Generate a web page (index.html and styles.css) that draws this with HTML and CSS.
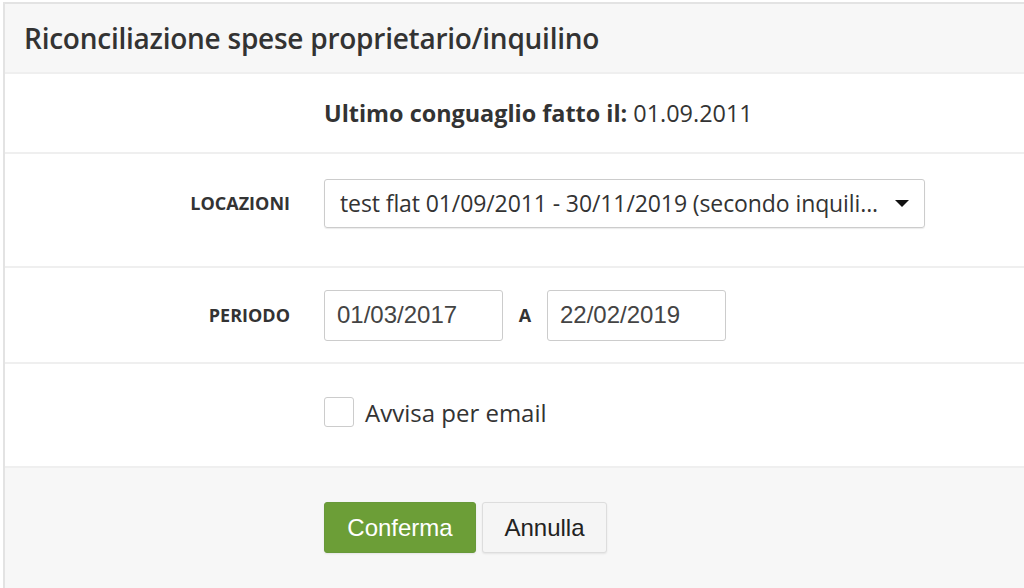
FILE: index.html
```html
<!DOCTYPE html>
<html lang="it">
<head>
    <meta charset="UTF-8">
    <title>Riconciliazione spese</title>
    <link rel="stylesheet" href="styles.css">
</head>
<body>
    <div class="modal">
        <div class="modal-header">
            <h1>Riconciliazione spese proprietario/inquilino</h1>
        </div>
        <div class="row">
            <div class="label"></div>
            <div class="control"><p class="info"><b>Ultimo conguaglio fatto il:</b> 01.09.2011</p></div>
        </div>
        <div class="row row-select">
            <div class="label">LOCAZIONI</div>
            <div class="control">
                <div class="select">
                    <span>test flat 01/09/2011 - 30/11/2019 (secondo inquili...</span>
                    <svg width="14" height="7" viewBox="0 0 14 7"><path d="M0 0h14L7 7z" fill="#111"/></svg>
                </div>
            </div>
        </div>
        <div class="row row-date">
            <div class="label">PERIODO</div>
            <div class="control dates">
                <div class="input">01/03/2017</div>
                <span class="sep">A</span>
                <div class="input">22/02/2019</div>
            </div>
        </div>
        <div class="row row-check">
            <div class="label"></div>
            <div class="control check">
                <span class="box"></span>
                <span>Avvisa per email</span>
            </div>
        </div>
        <div class="modal-footer">
            <div class="label"></div>
            <div class="control buttons">
                <button class="btn btn-green">Conferma</button>
                <button class="btn btn-default">Annulla</button>
            </div>
        </div>
    </div>
</body>
</html>
```

FILE: styles.css
```css
body{
  margin: 0;
  background: #fff;
  font-family: 'Open Sans', sans-serif;
  color: #333;
}
.modal{
  margin: 2px 0 0 3px;
  border-left: 2px solid #e3e3e3;
  border-top: 2px solid #e3e3e3;
  height: 586px;
  display: flex;
  flex-direction: column;
}
.modal-header{
  background: #f7f7f7;
  height: 68px;
  display: flex;
  align-items: center;
  padding-left: 19px;
  border-bottom: 2px solid #efefef;
}
h1{
  margin: 0;
  font-size: 28px;
  font-weight: 600;
  letter-spacing: -0.25px;
  color: #333;
}
.row, .modal-footer{
  display: grid;
  grid-template-columns: 285px 1fr;
  column-gap: 34px;
  align-items: center;
  border-bottom: 2px solid #efefef;
}
.row{ height: 78px; }
.row-select{ height: 98px; padding-bottom: 14px; }
.row-date{ height: 94px; }
.row-check{ height: 96px; padding-bottom: 6px; }
.modal-footer{
  background: #f7f7f7;
  border-bottom: none;
  flex: 1;
  align-items: start;
  padding-top: 34px;
}
.label{
  text-align: right;
  font-size: 18px;
  font-weight: 700;
}
.info{
  margin: 0;
  font-size: 23.4px;
}
.info b{ font-weight: 700; }
.select{
  width: 601px;
  height: 49px;
  box-sizing: border-box;
  border: 1px solid #ccc;
  border-radius: 3px;
  display: flex;
  align-items: center;
  justify-content: space-between;
  padding: 0 15px 0 15px;
  font-size: 23px;
  letter-spacing: -0.1px;
  box-shadow: 0 1px 1px rgba(0,0,0,0.08);
}
.dates{
  display: flex;
  align-items: center;
}
.input{
  width: 179px;
  height: 51px;
  box-sizing: border-box;
  border: 1px solid #ccc;
  border-radius: 3px;
  padding-left: 12px;
  display: flex;
  align-items: center;
  font-family: 'Liberation Sans', Arial, sans-serif;
  font-size: 24px;
  color: #444;
}
.sep{
  width: 44px;
  text-align: center;
  font-weight: 700;
  font-size: 18px;
}
.check{
  display: flex;
  align-items: center;
  font-size: 24px;
}
.box{
  width: 30px;
  height: 30px;
  box-sizing: border-box;
  border: 1px solid #ccc;
  border-radius: 3px;
  margin-right: 11px;
}
.buttons{
  display: flex;
  gap: 6px;
}
.btn{
  font-family: 'Liberation Sans', Arial, sans-serif;
  font-size: 24px;
  height: 51px;
  border: 1px solid #ddd;
  border-radius: 3px;
  box-shadow: 0 1px 2px rgba(0,0,0,0.08);
}
.btn-green{
  background: #6c9e37;
  border-color: #68993a;
  color: #fff;
  width: 152px;
}
.btn-default{
  background: #f5f5f5;
  color: #222;
  width: 125px;
}
```
